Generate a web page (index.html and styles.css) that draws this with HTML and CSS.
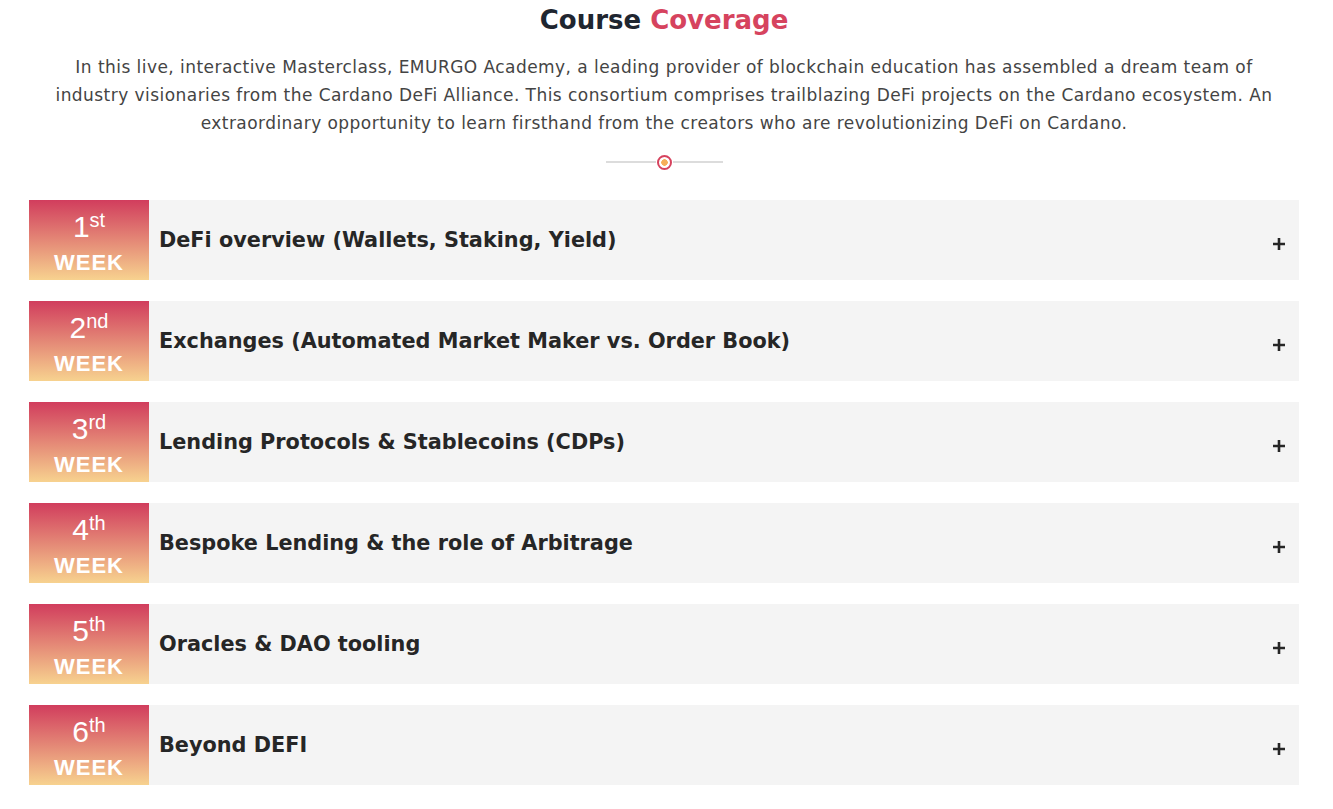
FILE: index.html
```html
<!DOCTYPE html>
<html lang="en">
<head>
<meta charset="utf-8">
<title>Course Coverage</title>
<link rel="stylesheet" href="styles.css">
</head>
<body>
<section class="coverage">
  <h2 class="title">Course <span class="accent">Coverage</span></h2>
  <p class="intro">In this live, interactive Masterclass, EMURGO Academy, a leading provider of blockchain education has assembled a dream team of industry visionaries from the Cardano DeFi Alliance. This consortium comprises trailblazing DeFi projects on the Cardano ecosystem. An extraordinary opportunity to learn firsthand from the creators who are revolutionizing DeFi on Cardano.</p>
  <div class="divider"><span class="line"></span><span class="dot"></span><span class="line"></span></div>
  <div class="weeks">
    <div class="week"><div class="badge"><div class="num">1<sup>st</sup></div><div class="lbl">WEEK</div></div><div class="name">DeFi overview (Wallets, Staking, Yield)</div><svg class="plus" viewBox="0 0 14 14"><path d="M7 1v12M1 7h12"/></svg></div>
    <div class="week"><div class="badge"><div class="num">2<sup>nd</sup></div><div class="lbl">WEEK</div></div><div class="name">Exchanges (Automated Market Maker vs. Order Book)</div><svg class="plus" viewBox="0 0 14 14"><path d="M7 1v12M1 7h12"/></svg></div>
    <div class="week"><div class="badge"><div class="num">3<sup>rd</sup></div><div class="lbl">WEEK</div></div><div class="name">Lending Protocols &amp; Stablecoins (CDPs)</div><svg class="plus" viewBox="0 0 14 14"><path d="M7 1v12M1 7h12"/></svg></div>
    <div class="week"><div class="badge"><div class="num">4<sup>th</sup></div><div class="lbl">WEEK</div></div><div class="name">Bespoke Lending &amp; the role of Arbitrage</div><svg class="plus" viewBox="0 0 14 14"><path d="M7 1v12M1 7h12"/></svg></div>
    <div class="week"><div class="badge"><div class="num">5<sup>th</sup></div><div class="lbl">WEEK</div></div><div class="name">Oracles &amp; DAO tooling</div><svg class="plus" viewBox="0 0 14 14"><path d="M7 1v12M1 7h12"/></svg></div>
    <div class="week"><div class="badge"><div class="num">6<sup>th</sup></div><div class="lbl">WEEK</div></div><div class="name">Beyond DEFI</div><svg class="plus" viewBox="0 0 14 14"><path d="M7 1v12M1 7h12"/></svg></div>
  </div>
</section>
</body>
</html>
```
FILE: styles.css
```css
html, body { margin: 0; padding: 0; background: #fff; }
body { font-family: "DejaVu Sans", "Noto Sans", sans-serif; }
.coverage { width: 1270px; margin: 0 0 0 29px; }
.title {
  margin: 0; padding-top: 2px;
  text-align: center; font-size: 26px; line-height: 36px; font-weight: 700;
  color: #1f2630;
}
.accent { color: #d6435e; }
.intro {
  margin: 15px auto 0; width: 1230px;
  text-align: center; font-size: 17px; letter-spacing: 0.45px; line-height: 28px; color: #444;
}
.divider { display: flex; align-items: center; justify-content: center; margin-top: 17px; height: 16px; }
.line { width: 50px; height: 2px; background: #dcdcdc; }
.dot {
  width: 11px; height: 11px; border: 2px solid #d6435e; border-radius: 50%;
  margin: 0 1px; box-sizing: content-box;
  background: radial-gradient(circle, #f6b05a 0 3px, #fff 3.5px);
}
.weeks { display: flex; flex-direction: column; gap: 21px; margin-top: 30px; }
.week { display: flex; align-items: center; height: 80px; background: #f4f4f4; }
.badge {
  width: 120px; height: 80px; flex: none;
  background: linear-gradient(180deg, #d13d5d 0%, #f7d28f 100%);
  color: #fff; font-family: "Liberation Sans", Arial, sans-serif; text-align: center;
  display: flex; flex-direction: column; align-items: center;
}
.num { font-size: 30px; line-height: 30px; margin-top: 12px; }
.num sup { font-size: 20px; vertical-align: 0; position: relative; top: -10px; }
.lbl { font-size: 22px; font-weight: 700; letter-spacing: 1px; line-height: 22px; margin-top: 7px; }
.name {
  flex: 1; padding-left: 10px; font-size: 20.8px; font-weight: 700; color: #262626;
}
.plus {
  width: 14px; height: 14px; flex: none; margin: 8px 13px 0 0;
  fill: none; stroke: #262626; stroke-width: 2.6;
}
```
